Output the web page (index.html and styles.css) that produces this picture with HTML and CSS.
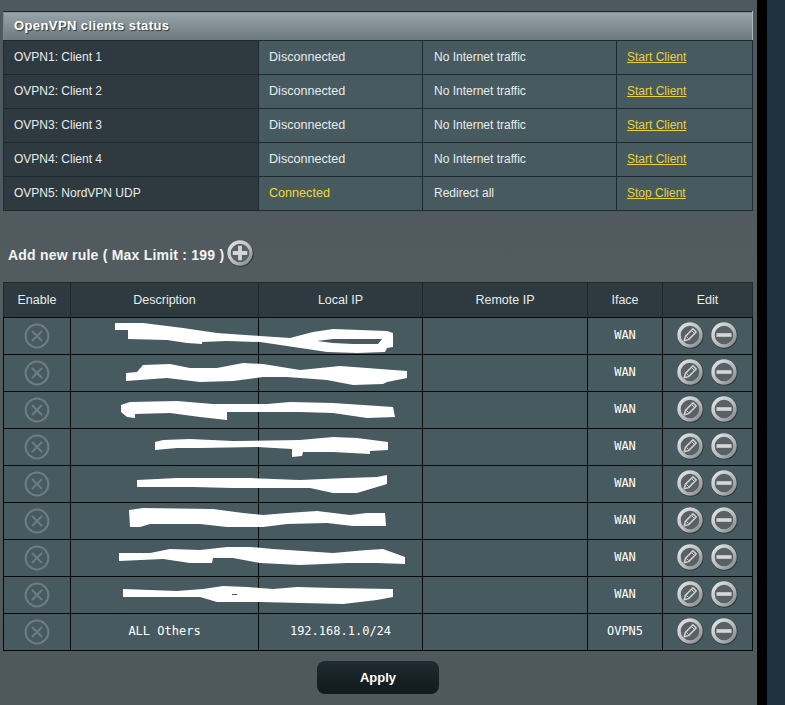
FILE: index.html
```html
<!DOCTYPE html>
<html lang="en">
<head>
    <meta charset="UTF-8">
    <meta name="viewport" content="width=device-width, initial-scale=1.0">
    <title>VPN Director</title>
    <link rel="stylesheet" href="styles.css">
</head>
<body>

<svg class="icon-defs" aria-hidden="true">
    <defs>
        <linearGradient id="ring" x1="0" y1="0" x2="1" y2="1">
            <stop offset="0" stop-color="#e4e6e6"/>
            <stop offset="0.6" stop-color="#b4b8b9"/>
            <stop offset="1" stop-color="#83888a"/>
        </linearGradient>
        <symbol id="icon-base" viewBox="0 0 28 28">
            <circle cx="14.6" cy="14.8" r="13" fill="#1f2a2e" opacity="0.65"/>
            <circle cx="14" cy="14" r="11" fill="#596164" stroke="url(#ring)" stroke-width="3.4"/>
        </symbol>
        <symbol id="icon-edit" viewBox="0 0 28 28">
            <use href="#icon-base" width="28" height="28"/>
            <path d="M8.2 19.8l1.2-4.4 7.6-7.6 3.2 3.2-7.6 7.6z" fill="none" stroke="#cfd2d3" stroke-width="1.5" stroke-linejoin="round"/>
            <path d="M10.5 15.5l2 2M15.4 9.4l3.2 3.2" stroke="#cfd2d3" stroke-width="1"/>
        </symbol>
        <symbol id="icon-minus" viewBox="0 0 28 28">
            <use href="#icon-base" width="28" height="28"/>
            <rect x="6.5" y="12.2" width="15" height="3.6" fill="#d5d7d8"/>
        </symbol>
        <symbol id="icon-plus" viewBox="0 0 28 28">
            <use href="#icon-base" width="28" height="28"/>
            <path d="M6.8 14h14.4M14 6.8v14.4" stroke="#d5d7d8" stroke-width="3.8"/>
        </symbol>
        <symbol id="icon-off" viewBox="0 0 26 26">
            <circle cx="13" cy="13" r="11.4" fill="none" stroke="#6f7c80" stroke-width="2"/>
            <path d="M8 8l10 10M18 8L8 18" stroke="#6f7c80" stroke-width="2"/>
        </symbol>
    </defs>
</svg>

<div class="panel">
    <table class="status-table">
        <colgroup>
            <col class="s-name"><col class="s-state"><col class="s-traffic"><col class="s-action">
        </colgroup>
        <thead>
            <tr><th colspan="4" class="status-title">OpenVPN clients status</th></tr>
        </thead>
        <tbody>
            <tr><th>OVPN1: Client 1</th><td class="state">Disconnected</td><td class="traffic">No Internet traffic</td><td><a href="#">Start Client</a></td></tr>
            <tr><th>OVPN2: Client 2</th><td class="state">Disconnected</td><td class="traffic">No Internet traffic</td><td><a href="#">Start Client</a></td></tr>
            <tr><th>OVPN3: Client 3</th><td class="state">Disconnected</td><td class="traffic">No Internet traffic</td><td><a href="#">Start Client</a></td></tr>
            <tr><th>OVPN4: Client 4</th><td class="state">Disconnected</td><td class="traffic">No Internet traffic</td><td><a href="#">Start Client</a></td></tr>
            <tr><th>OVPN5: NordVPN UDP</th><td class="state connected">Connected</td><td class="traffic">Redirect all</td><td><a href="#">Stop Client</a></td></tr>
        </tbody>
    </table>

    <div class="add-rule">
        <span class="add-label">Add new rule ( Max Limit : 199 )</span>
        <svg class="icon-btn"><use href="#icon-plus"/></svg>
    </div>

    <table class="rules-table">
        <colgroup>
            <col class="r-enable"><col class="r-desc"><col class="r-local"><col class="r-remote"><col class="r-iface"><col class="r-edit">
        </colgroup>
        <thead>
            <tr><th>Enable</th><th>Description</th><th>Local IP</th><th>Remote IP</th><th>Iface</th><th>Edit</th></tr>
        </thead>
        <tbody>
            <tr><td class="off-cell"><svg class="icon-off"><use href="#icon-off"/></svg></td><td></td><td></td><td></td><td>WAN</td><td class="edit-cell"><svg class="icon-btn"><use href="#icon-edit"/></svg><svg class="icon-btn"><use href="#icon-minus"/></svg></td></tr>
            <tr><td class="off-cell"><svg class="icon-off"><use href="#icon-off"/></svg></td><td></td><td></td><td></td><td>WAN</td><td class="edit-cell"><svg class="icon-btn"><use href="#icon-edit"/></svg><svg class="icon-btn"><use href="#icon-minus"/></svg></td></tr>
            <tr><td class="off-cell"><svg class="icon-off"><use href="#icon-off"/></svg></td><td></td><td></td><td></td><td>WAN</td><td class="edit-cell"><svg class="icon-btn"><use href="#icon-edit"/></svg><svg class="icon-btn"><use href="#icon-minus"/></svg></td></tr>
            <tr><td class="off-cell"><svg class="icon-off"><use href="#icon-off"/></svg></td><td></td><td></td><td></td><td>WAN</td><td class="edit-cell"><svg class="icon-btn"><use href="#icon-edit"/></svg><svg class="icon-btn"><use href="#icon-minus"/></svg></td></tr>
            <tr><td class="off-cell"><svg class="icon-off"><use href="#icon-off"/></svg></td><td></td><td></td><td></td><td>WAN</td><td class="edit-cell"><svg class="icon-btn"><use href="#icon-edit"/></svg><svg class="icon-btn"><use href="#icon-minus"/></svg></td></tr>
            <tr><td class="off-cell"><svg class="icon-off"><use href="#icon-off"/></svg></td><td></td><td></td><td></td><td>WAN</td><td class="edit-cell"><svg class="icon-btn"><use href="#icon-edit"/></svg><svg class="icon-btn"><use href="#icon-minus"/></svg></td></tr>
            <tr><td class="off-cell"><svg class="icon-off"><use href="#icon-off"/></svg></td><td></td><td></td><td></td><td>WAN</td><td class="edit-cell"><svg class="icon-btn"><use href="#icon-edit"/></svg><svg class="icon-btn"><use href="#icon-minus"/></svg></td></tr>
            <tr><td class="off-cell"><svg class="icon-off"><use href="#icon-off"/></svg></td><td></td><td></td><td></td><td>WAN</td><td class="edit-cell"><svg class="icon-btn"><use href="#icon-edit"/></svg><svg class="icon-btn"><use href="#icon-minus"/></svg></td></tr>
            <tr><td class="off-cell"><svg class="icon-off"><use href="#icon-off"/></svg></td><td>ALL Others</td><td>192.168.1.0/24</td><td></td><td>OVPN5</td><td class="edit-cell"><svg class="icon-btn"><use href="#icon-edit"/></svg><svg class="icon-btn"><use href="#icon-minus"/></svg></td></tr>
        </tbody>
    </table>

    <div class="apply-row">
        <button class="apply-btn">Apply</button>
    </div>
</div>
<div class="gutter"></div>
<div class="side"></div>

<!-- white marker strokes painted over the screenshot -->
<svg class="scribbles" viewBox="0 0 785 705" aria-hidden="true">
    <path fill-rule="evenodd" d="M115 323L143 323 183 328 217 333 260 336 290 338 313 332 333 329 387 331 393 333 393 347 387 348 385 352 357 353 327 352 287 346 260 342 227 341 202 342 202 344 187 343 167 340 128 339 128 330 115 330ZM317 341L333 339 382 339 378 344 353 344 333 343Z"/>
    <path d="M126 373L137 372 143 365 170 364 190 368 217 368 243 363 263 364 300 370 340 366 367 368 407 371 407 378 387 382 383 384 353 385 327 380 287 377 263 377 233 381 200 382 167 378 126 381Z"/>
    <path d="M121 405L130 402 177 401 213 404 267 404 290 402 333 403 393 407 395 417 367 418 333 413 300 412 227 412 227 420 200 417 170 413 135 414 135 418 127 417 121 412Z"/>
    <path d="M155 442L163 440 190 439 233 441 300 440 333 437 357 438 388 442 388 450 370 451 370 454 333 452 303 452 302 456 292 457 292 449 257 447 200 448 177 448 155 450Z"/>
    <path d="M137 480L177 478 250 478 300 480 347 478 377 477 387 475 387 484 377 487 357 493 333 493 310 488 233 488 193 487 137 487Z"/>
    <path d="M129 510L143 508 213 509 243 513 263 515 287 513 317 511 350 515 367 513 385 513 386 526 353 526 327 523 287 524 263 527 227 527 200 524 150 524 140 527 130 527Z"/>
    <path d="M119 553L150 553 170 549 200 550 227 547 250 547 273 549 333 553 367 550 383 549 405 557 405 564 377 563 347 563 300 565 260 563 233 558 213 558 212 563 190 563 163 559 119 561Z"/>
    <path fill-rule="evenodd" d="M123 589L177 591 203 589 223 586 247 587 273 589 297 587 333 588 393 589 393 597 377 600 343 604 260 602 217 602 200 597 123 597ZM232 594L237 594 237 595 232 595Z"/>
</svg>

</body>
</html>
```

FILE: styles.css
```css
* {
    box-sizing: border-box;
}

body {
    margin: 0;
    display: flex;
    height: 705px;
    overflow: hidden;
    background-color: #20323f;
    font-family: "Liberation Sans", Arial, sans-serif;
    font-size: 12px;
    color: #e8ecec;
}

.panel {
    width: 757px;
    padding: 11px 0 0 3px;
    background: linear-gradient(#4c595e, #525b5e 40%, #4f595c);
}

.gutter {
    width: 10px;
    background-color: #000;
}

.side {
    flex: 1;
    background-color: #20323f;
}

.icon-defs {
    position: absolute;
    width: 0;
    height: 0;
}

table {
    border-collapse: collapse;
    table-layout: fixed;
    width: 749px;
}

td, th {
    font-weight: normal;
    padding: 0;
}

.status-table td, .status-table th {
    border: 1px solid #1d2a2f;
    height: 34px;
    text-align: left;
    padding: 0 0 2px 10px;
    font-size: 12px;
    background-color: #475a60;
}

.status-table tbody th {
    background-color: #2e3a3f;
}

.status-table .status-title {
    height: 29px;
    font-size: 13px;
    font-weight: bold;
    letter-spacing: 0.4px;
    color: #fff;
    text-shadow: 1px 1px 1px #2a3539;
    border-left-color: #7d8b90;
    border-right-color: #b0babd;
    background: linear-gradient(#97a5aa, #6b797e);
}

.s-name { width: 255px; }
.s-state { width: 164px; }
.s-traffic { width: 194px; }
.s-action { width: 136px; }

.status-table .state {
    font-size: 12.6px;
}

.status-table .traffic {
    padding-left: 11px;
}

.status-table a {
    color: #e6d23c;
}

.status-table .connected {
    color: #f3d92c;
}

.add-rule {
    display: flex;
    align-items: center;
    gap: 2px;
    height: 28px;
    margin-top: 28px;
    margin-bottom: 15px;
    padding-left: 5px;
    font-size: 14px;
    font-weight: bold;
    letter-spacing: 0.22px;
    color: #f1f3f3;
}

.add-label {
    padding-top: 3px;
}

.icon-btn {
    width: 28px;
    height: 28px;
}

.r-enable { width: 67px; }
.r-desc { width: 188px; }
.r-local { width: 164px; }
.r-remote { width: 165px; }
.r-iface { width: 75px; }
.r-edit { width: 90px; }

.rules-table th {
    height: 35px;
    border: 1px solid #1c282c;
    border-bottom-color: #05090b;
    font-size: 12.5px;
    text-align: center;
    background-color: #2e3a3f;
}

.rules-table td {
    height: 37px;
    border: 1px solid #05090b;
    padding-bottom: 2px;
    text-align: center;
    font-family: "DejaVu Sans Mono", monospace;
    font-size: 12px;
    color: #fff;
    background-color: #475a60;
}

.rules-table .off-cell {
    padding-bottom: 0;
}

.rules-table .edit-cell {
    padding-right: 2px;
}

.rules-table td svg {
    display: inline-block;
    vertical-align: middle;
}

.icon-off {
    width: 26px;
    height: 26px;
}

.edit-cell .icon-btn + .icon-btn {
    margin-left: 6px;
}

.apply-row {
    display: flex;
    justify-content: center;
    width: 750px;
    margin-top: 10px;
}

.apply-btn {
    width: 122px;
    height: 33px;
    border: none;
    border-radius: 8px;
    font-family: "Liberation Sans", Arial, sans-serif;
    font-size: 13px;
    font-weight: bold;
    color: #fff;
    background: linear-gradient(#1f2c31, #11191c);
}

.scribbles {
    position: absolute;
    top: 0;
    left: 0;
    width: 785px;
    height: 705px;
    fill: #fff;
    pointer-events: none;
}
```
